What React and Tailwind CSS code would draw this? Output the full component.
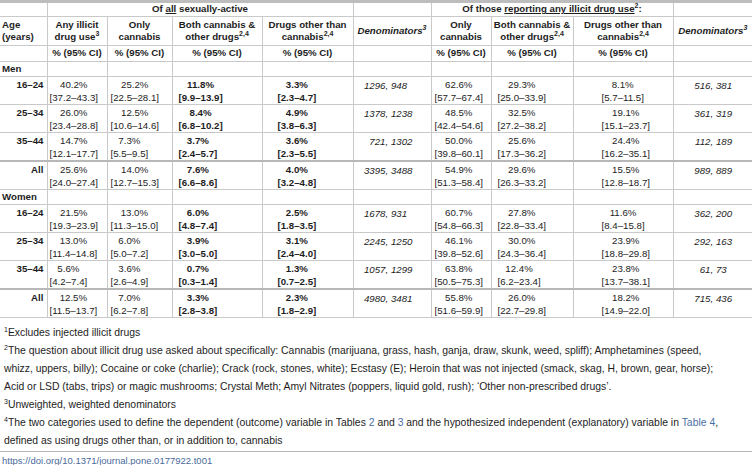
import React from 'react';

const FONT = { fontFamily: '"Liberation Sans", Arial, sans-serif' };

// each row: age, then 9 cells. "a|b" = value over CI, "a,b" = denominators
const MEN = [
  ['16–24', '40.2%|[37.2–43.3]', '25.2%|[22.5–28.1]', '11.8%|[9.9–13.9]', '3.3%|[2.3–4.7]', '1296,948', '62.6%|[57.7–67.4]', '29.3%|[25.0–33.9]', '8.1%|[5.7–11.5]', '516,381'],
  ['25–34', '26.0%|[23.4–28.8]', '12.5%|[10.6–14.6]', '8.4%|[6.8–10.2]', '4.9%|[3.8–6.3]', '1378,1238', '48.5%|[42.4–54.6]', '32.5%|[27.2–38.2]', '19.1%|[15.1–23.7]', '361,319'],
  ['35–44', '14.7%|[12.1–17.7]', '7.3%|[5.5–9.5]', '3.7%|[2.4–5.7]', '3.6%|[2.3–5.5]', '721,1302', '50.0%|[39.8–60.1]', '25.6%|[17.3–36.2]', '24.4%|[16.2–35.1]', '112,189'],
  ['All', '25.6%|[24.0–27.4]', '14.0%|[12.7–15.3]', '7.6%|[6.6–8.6]', '4.0%|[3.2–4.8]', '3395,3488', '54.9%|[51.3–58.4]', '29.6%|[26.3–33.2]', '15.5%|[12.8–18.7]', '989,889'],
];

const WOMEN = [
  ['16–24', '21.5%|[19.3–23.9]', '13.0%|[11.3–15.0]', '6.0%|[4.8–7.4]', '2.5%|[1.8–3.5]', '1678,931', '60.7%|[54.8–66.3]', '27.8%|[22.8–33.4]', '11.6%|[8.4–15.8]', '362,200'],
  ['25–34', '13.0%|[11.4–14.8]', '6.0%|[5.0–7.2]', '3.9%|[3.0–5.0]', '3.1%|[2.4–4.0]', '2245,1250', '46.1%|[39.8–52.6]', '30.0%|[24.3–36.4]', '23.9%|[18.8–29.8]', '292,163'],
  ['35–44', '5.6%|[4.2–7.4]', '3.6%|[2.6–4.9]', '0.7%|[0.3–1.4]', '1.3%|[0.7–2.5]', '1057,1299', '63.8%|[50.5–75.3]', '12.4%|[6.2–23.4]', '23.8%|[13.7–38.1]', '61,73'],
  ['All', '12.5%|[11.5–13.7]', '7.0%|[6.2–7.8]', '3.3%|[2.8–3.8]', '2.3%|[1.8–2.9]', '4980,3481', '55.8%|[51.6–59.9]', '26.0%|[22.7–29.8]', '18.2%|[14.9–22.0]', '715,436'],
];

const WIDTHS = ['w-[47px]', 'w-[60px]', 'w-[65px]', 'w-[90px]', 'w-[91px]', 'w-[78px]', 'w-[60px]', 'w-[82px]', 'w-[100px]', 'w-[79px]'];
const PAD = ['pl-[2px]', 'pl-[3px]', 'pl-[6px]', 'pl-[15px]', '', 'pl-[3px]', 'pl-[6px]', 'pl-[28px]', ''];
const COMMA = ['', '', '', '', 'w-[32px]', '', '', '', 'w-[37px]'];

const line = 'border-r border-[#c9c9c9] last:border-r-0 p-0';

const Sup = ({ children }) => <sup className="text-[7px] top-[-4px]">{children}</sup>;

const Cell = ({ value, idx }) => {
  if (value.includes(',')) {
    const [a, b] = value.split(',');
    return (
      <td className={`${line} align-top pt-[3px]`}>
        <div className="flex italic">
          <span className={`${COMMA[idx]} text-right shrink-0`}>{a}</span>
          <span className="whitespace-pre">, {b}</span>
        </div>
      </td>
    );
  }
  const [pct, ci] = value.split('|');
  const bold = idx === 2 || idx === 3;
  return (
    <td className={`${line} align-top pt-[2px] ${PAD[idx]}`}>
      <div className={`inline-block text-center whitespace-nowrap ${bold ? 'font-bold' : ''}`}>
        {pct}
        <br />
        {ci}
      </div>
    </td>
  );
};

const DataRow = ({ row, thick }) => (
  <tr className={`h-[28px] ${thick ? 'border-t-2 border-[#b8b8b8]' : 'border-t border-[#c9c9c9]'}`}>
    <td className={`${line} align-top pt-[2px] pr-[3px] text-right font-bold`}>{row[0]}</td>
    {row.slice(1).map((v, i) => (
      <Cell key={i} value={v} idx={i} />
    ))}
  </tr>
);

const GroupRow = ({ label }) => (
  <tr className="h-[15px] border-t border-[#c9c9c9]">
    <td className={`${line} font-bold pl-[2px]`}>{label}</td>
    {Array.from({ length: 9 }).map((_, i) => (
      <td key={i} className={line} />
    ))}
  </tr>
);

const Head = ({ children, italic }) => (
  <th className={`${line} font-bold text-center align-middle leading-[12px] whitespace-nowrap ${italic ? 'italic' : ''}`}>
    {children}
  </th>
);

const App = () => (
  <div className="w-[752px] h-[465px] bg-white text-[#1d1d1d] overflow-hidden" style={FONT}>
    <table className="table-fixed border-collapse w-[752px] text-[9.7px] leading-[12.5px] border-t-[3px] border-[#bdbdbd]">
      <colgroup>
        {WIDTHS.map((w, i) => (
          <col key={i} className={w} />
        ))}
      </colgroup>
      <thead>
        <tr className="h-[15px]">
          <th className={line} />
          <th colSpan={4} className={`${line} font-bold text-center`}>
            Of <span className="underline">all</span> sexually-active
          </th>
          <th className={line} />
          <th colSpan={3} className={`${line} font-bold text-center`}>
            Of those <span className="underline">reporting any illicit drug use</span>
            <Sup>2</Sup>:
          </th>
          <th className={line} />
        </tr>
        <tr className="h-[29px] border-t border-[#c9c9c9]">
          <th className={`${line} font-bold text-left pl-[2px] leading-[12px]`}>
            Age
            <br />
            (years)
          </th>
          <Head>
            Any illicit
            <br />
            drug use<Sup>3</Sup>
          </Head>
          <Head>
            Only
            <br />
            cannabis
          </Head>
          <Head>
            Both cannabis &amp;
            <br />
            other drugs<Sup>2,4</Sup>
          </Head>
          <Head>
            Drugs other than
            <br />
            cannabis<Sup>2,4</Sup>
          </Head>
          <Head italic>
            Denominators<Sup>3</Sup>
          </Head>
          <Head>
            Only
            <br />
            cannabis
          </Head>
          <Head>
            Both cannabis &amp;
            <br />
            other drugs<Sup>2,4</Sup>
          </Head>
          <Head>
            Drugs other than
            <br />
            cannabis<Sup>2,4</Sup>
          </Head>
          <Head italic>
            Denominators<Sup>3</Sup>
          </Head>
        </tr>
        <tr className="h-[16px] border-t border-[#c9c9c9]">
          {['', '% (95% CI)', '% (95% CI)', '% (95% CI)', '% (95% CI)', '', '% (95% CI)', '% (95% CI)', '% (95% CI)', ''].map((t, i) => (
            <th key={i} className={`${line} font-bold text-center`}>
              {t}
            </th>
          ))}
        </tr>
      </thead>
      <tbody>
        <GroupRow label="Men" />
        {MEN.map((r, i) => (
          <DataRow key={r[0]} row={r} thick={i === 3} />
        ))}
        <GroupRow label="Women" />
        {WOMEN.map((r, i) => (
          <DataRow key={r[0]} row={r} thick={i === 3} />
        ))}
      </tbody>
    </table>
    <div className="border-t border-[#c9c9c9]" />

    {/* footnotes */}
    <div className="mt-[6px] pl-[4px] text-[10.4px] leading-[18px] whitespace-nowrap">
      <p>
        <Sup>1</Sup>Excludes injected illicit drugs
      </p>
      <p>
        <Sup>2</Sup>The question about illicit drug use asked about specifically: Cannabis (marijuana, grass, hash, ganja, draw, skunk, weed, spliff); Amphetamines (speed,
        <br />
        whizz, uppers, billy); Cocaine or coke (charlie); Crack (rock, stones, white); Ecstasy (E); Heroin that was not injected (smack, skag, H, brown, gear, horse);
        <br />
        Acid or LSD (tabs, trips) or magic mushrooms; Crystal Meth; Amyl Nitrates (poppers, liquid gold, rush); ‘Other non-prescribed drugs’.
      </p>
      <p>
        <Sup>3</Sup>Unweighted, weighted denominators
      </p>
      <p>
        <Sup>4</Sup>The two categories used to define the dependent (outcome) variable in Tables <span className="text-[#4a6fa5]">2</span> and{' '}
        <span className="text-[#4a6fa5]">3</span> and the hypothesized independent (explanatory) variable in{' '}
        <span className="text-[#4a6fa5]">Table 4</span>,
        <br />
        defined as using drugs other than, or in addition to, cannabis
      </p>
    </div>
    <div className="mt-[1px] border-t border-[#b5b5b5]" />
    <p className="pl-[2px] pt-[3px] text-[9.5px] leading-[12px] text-[#4a6a9a]">https://doi.org/10.1371/journal.pone.0177922.t001</p>
  </div>
);

export default App;
